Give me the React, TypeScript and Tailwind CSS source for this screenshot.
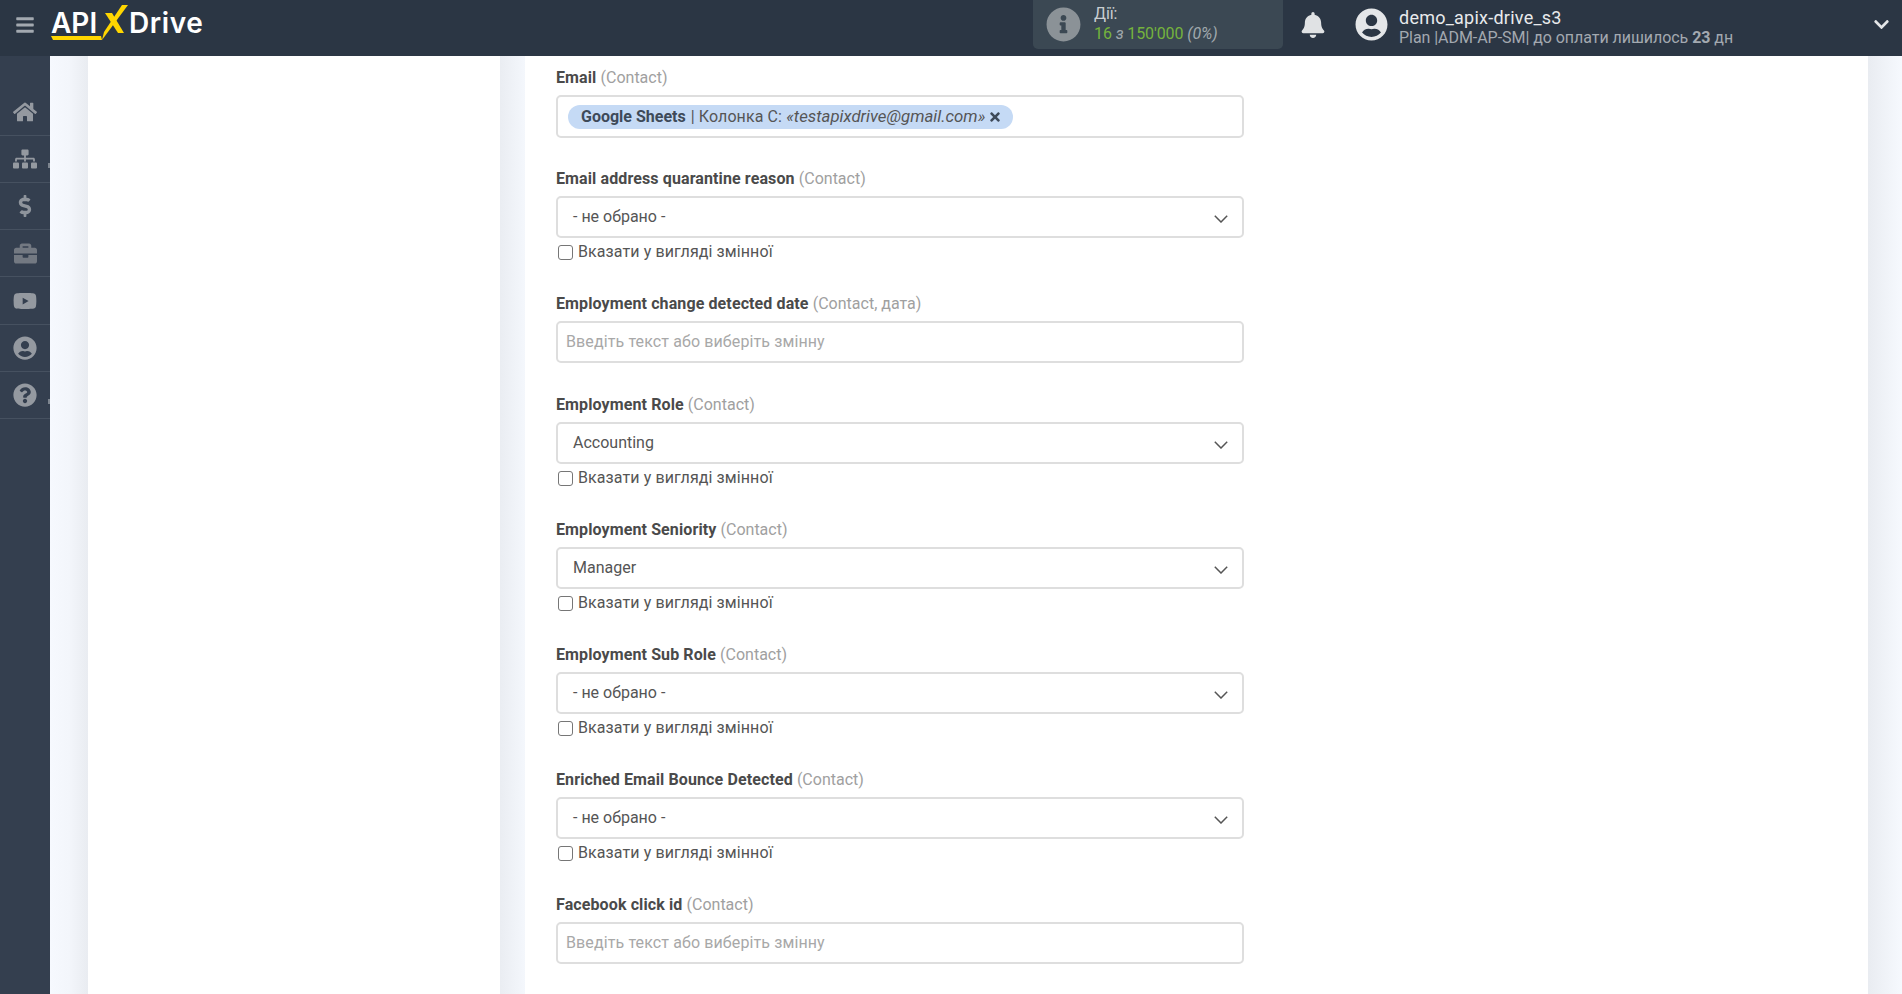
import { FaBars, FaHome, FaSitemap, FaDollarSign, FaBriefcase, FaYoutube, FaUserCircle, FaQuestionCircle, FaBell, FaInfoCircle, FaChevronDown, FaTimes } from "react-icons/fa";

const nav = [FaHome, FaSitemap, FaDollarSign, FaBriefcase, FaYoutube, FaUserCircle, FaQuestionCircle];

function Label({ name, note }: { name: string; note: string }) {
  return (
    <div className="h-[21px] pt-[1px] mb-[7px] text-[16px] leading-[20px] font-bold tracking-[0.11px] text-[#4a4a4a]">
      {name} <span className="font-normal tracking-normal text-[#a0a0a0]">({note})</span>
    </div>
  );
}

function TextRow({ name, note }: { name: string; note: string }) {
  return (
    <div className="h-[101px]">
      <Label name={name} note={note} />
      <div className="h-[42px] border-2 border-[#dedede] rounded-[5px] bg-white pl-[8px] flex items-center text-[16px] tracking-[0.11px] text-[#a8a8a8]">
        Введіть текст або виберіть змінну
      </div>
    </div>
  );
}

function SelectRow({ name, value }: { name: string; value: string }) {
  return (
    <div className="h-[125px]">
      <Label name={name} note="Contact" />
      <div className="h-[42px] border-2 border-[#dedede] rounded-[5px] bg-white pl-[15px] pr-[14px] flex items-center justify-between text-[16px] text-[#555555]">
        <span>{value}</span>
        <svg width="14" height="8" viewBox="0 0 14 8" className="mt-[3px]">
          <path d="M0.8 0.8 L7 7 L13.2 0.8" fill="none" stroke="#555555" strokeWidth="1.5" />
        </svg>
      </div>
      <label className="mt-[4px] h-[20px] flex items-center text-[16px] tracking-[0.1px] text-[#555555]">
        <span className="w-[15px] h-[15px] ml-[2px] mr-[5px] border border-[#767676] rounded-[3px] bg-white" />
        Вказати у вигляді змінної
      </label>
    </div>
  );
}

export default function App() {
  return (
    <div className="h-[994px] overflow-hidden flex flex-col font-['Roboto',sans-serif]">
      <header className="h-[56px] shrink-0 bg-[#2b3644] text-white">
        <div className="h-[49px] flex items-center">
          <div className="w-[50px] flex justify-center">
            <FaBars className="text-[#a3a9b0] text-[20px]" />
          </div>
          <div className="relative self-start w-[160px] h-[56px] font-['Inter',sans-serif] font-semibold text-[28px] leading-[56px]">
            <span className="absolute left-[1px] top-[-5px]">API</span>
            <span className="absolute left-[79px] top-[-5px] tracking-[0.6px]">Drive</span>
            <svg className="absolute left-0 top-0" width="160" height="56" viewBox="0 0 160 56">
              <path d="M1 36 L51 36 L52 40 L3 40 Z" fill="#ffd600" />
              <path d="M55 13 L62 13 L74 33 L68 33 Z" fill="#ffd600" />
              <path d="M78 5 L52 40 L54 32 L72 5 Z" fill="#ffd600" />
            </svg>
          </div>
          <div className="ml-[823px] w-[250px] h-[49px] rounded-b-[5px] bg-[#3b4853] flex items-center pl-[13px]">
            <FaInfoCircle className="text-[#8b9297] text-[35px]" />
            <div className="ml-[13px] text-[16px] leading-[18px] tracking-[-0.1px]">
              <div className="text-[#c9ced1] mt-[-2px] mb-[2px]">Дії:</div>
              <div className="text-[#75b33d]">
                16 <i className="text-[#a0a8ad]">з</i> 150'000 <i className="text-[#a0a8ad]">(0%)</i>
              </div>
            </div>
          </div>
          <FaBell className="ml-[17px] text-[#e0e2e4] text-[26px]" />
          <FaUserCircle className="ml-[29px] text-[#e4e6e8] text-[33px]" />
          <div className="ml-[11px] flex-1 pt-[4px]">
            <div className="text-[18px] leading-[22px] tracking-[0.24px] text-[#e8eaec]">demo_apix-drive_s3</div>
            <div className="text-[16px] leading-[18px] tracking-[-0.05px] text-[#a3a9b0]">
              Plan |ADM-AP-SM| до оплати лишилось <b className="font-bold">23</b> дн
            </div>
          </div>
          <FaChevronDown className="mr-[12px] text-[#e4e6e8] text-[17px]" />
        </div>
      </header>
      <div className="flex-1 flex min-h-0">
        <nav className="w-[50px] shrink-0 bg-[#343f4f] pt-[33px]">
          {nav.map((Icon, i) => (
            <div key={i} className={i === 4 ? "relative h-[48px] border-b border-[#465160] flex items-center justify-center" : "relative h-[47px] border-b border-[#465160] flex items-center justify-center"}>
              <Icon className={i === 2 ? "text-[#8e949c] text-[22px]" : i === 3 ? "text-[#737982] text-[23px]" : "text-[#9499a0] text-[24px]"} />
              {(i === 1 || i === 6) && <span className="absolute right-0 top-[27px] w-[2px] h-[5px] bg-[#7d858f]" />}
            </div>
          ))}
        </nav>
        <main className="flex-1 flex">
          <div className="w-[38px] bg-gradient-to-r from-[#f6f9fe] via-[#f3f6fb] to-[#e9ecf1]" />
          <div className="w-[412px] bg-white" />
          <div className="w-[25px] bg-gradient-to-r from-[#eaedf2] to-[#f4f7fc]" />
          <div className="flex-1 bg-white pl-[31px] pt-[12px]">
            <div className="w-[688px]">
              <div className="h-[100px]">
                <div className="h-[20px] mb-[7px] text-[16px] leading-[20px] font-bold tracking-[0.11px] text-[#4a4a4a]">
                  Email <span className="font-normal tracking-normal text-[#a0a0a0]">(Contact)</span>
                </div>
                <div className="h-[43px] border-2 border-[#dedede] rounded-[5px] bg-white pl-[10px] flex items-center text-[16px] text-[#555555]">
                  <div className="h-[24px] rounded-[12px] bg-[#c5daf5] pl-[13px] pr-[11px] flex items-center">
                    <b className="font-bold text-[#3e4a59]">Google Sheets</b>
                    <span className="ml-[5px] tracking-[0.1px]">| Колонка C: <i className="text-[16.8px] tracking-normal">«testapixdrive@gmail.com»</i></span>
                    <FaTimes className="ml-[3px] text-[14px] text-[#3e4a59]" />
                  </div>
                </div>
              </div>
              <SelectRow name="Email address quarantine reason" value="- не обрано -" />
              <TextRow name="Employment change detected date" note="Contact, дата" />
              <SelectRow name="Employment Role" value="Accounting" />
              <SelectRow name="Employment Seniority" value="Manager" />
              <SelectRow name="Employment Sub Role" value="- не обрано -" />
              <SelectRow name="Enriched Email Bounce Detected" value="- не обрано -" />
              <TextRow name="Facebook click id" note="Contact" />
            </div>
          </div>
          <div className="w-[34px] bg-gradient-to-r from-[#e9ecf1] to-[#f6f9fe]" />
        </main>
      </div>
    </div>
  );
}
